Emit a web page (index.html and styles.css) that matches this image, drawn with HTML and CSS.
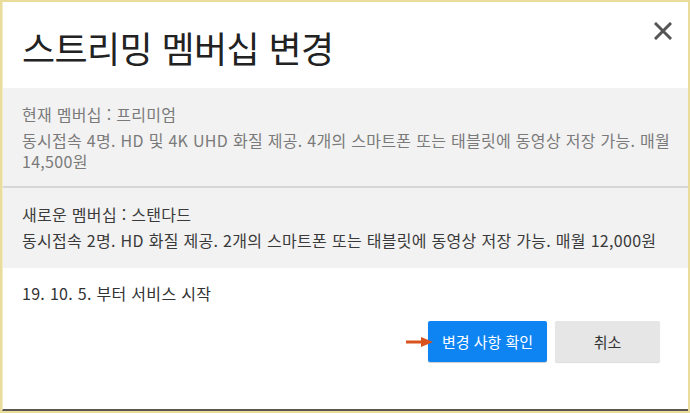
FILE: index.html
```html
<!DOCTYPE html>
<html lang="ko">
<head>
    <meta charset="UTF-8">
    <title>스트리밍 멤버십 변경</title>
    <link rel="stylesheet" href="styles.css">
</head>
<body>
    <div class="frame">
        <div class="dialog">
            <div class="dialog-header">
                <h1 class="title">스트리밍 멤버십 변경</h1>
                <button class="close" aria-label="닫기">
                    <svg width="18" height="18" viewBox="0 0 18 18">
                        <path d="M2 2 L16 16 M16 2 L2 16" stroke="#555" stroke-width="3" stroke-linecap="square" />
                    </svg>
                </button>
            </div>

            <div class="plan plan-current">
                <div class="plan-name">현재 멤버십 : 프리미엄</div>
                <div class="plan-desc">동시접속 4명. HD 및 4K UHD 화질 제공. 4개의 스마트폰 또는 태블릿에 동영상 저장 가능. 매월 14,500원</div>
            </div>

            <div class="plan plan-new">
                <div class="plan-name">새로운 멤버십 : 스탠다드</div>
                <div class="plan-desc">동시접속 2명. HD 화질 제공. 2개의 스마트폰 또는 태블릿에 동영상 저장 가능. 매월 12,000원</div>
            </div>

            <div class="start-date">19. 10. 5. 부터 서비스 시작</div>

            <div class="actions">
                <div class="confirm-wrap">
                    <svg class="pointer" width="28" height="10" viewBox="0 0 28 10">
                        <path d="M0 5 L18 5" stroke="#d9531e" stroke-width="3" />
                        <path d="M15 0 L27 5 L15 10 Z" fill="#d9531e" />
                    </svg>
                    <button class="btn btn-primary">변경 사항 확인</button>
                </div>
                <button class="btn btn-secondary">취소</button>
            </div>
        </div>
    </div>
</body>
</html>
```

FILE: styles.css
```css
* {
    box-sizing: border-box;
}

body {
    margin: 0;
    padding: 0;
    background: #e9d98f;
    font-family: "Noto Sans CJK KR", "Noto Sans", sans-serif;
}

.frame {
    width: 690px;
    height: 413px;
    padding: 2px 2px 2px 2px;
    background: #eadc9a;
}

.dialog {
    height: 100%;
    background: #fff;
    border-bottom: 2px solid #5a5650;
    border-left: 1px solid #f3ecc8;
}

.dialog-header {
    display: flex;
    justify-content: space-between;
    align-items: flex-start;
    height: 86px;
    padding: 0 16px 0 19px;
}

.title {
    margin: 19px 0 0 0;
    font-size: 36px;
    font-weight: 400;
    color: #222;
    letter-spacing: -0.6px;
}

.close {
    margin-top: 20px;
    padding: 0;
    border: none;
    background: none;
    cursor: pointer;
}

.plan {
    background: #f2f2f2;
    padding: 14px 12px 12px 19px;
    font-size: 16px;
    letter-spacing: 0.3px;
    line-height: 24px;
    word-break: keep-all;
}

.plan-current {
    height: 100px;
    color: #7a7a7a;
    border-bottom: 2px solid #d6d6d6;
}

.plan-new {
    height: 80px;
    color: #3a3a3a;
}

.plan-name {
    margin-bottom: 4px;
}

.plan-desc {
    line-height: 21px;
}

.start-date {
    padding: 13px 19px 0 19px;
    font-size: 16px;
    letter-spacing: 0.3px;
    color: #333;
}

.actions {
    display: flex;
    justify-content: flex-end;
    gap: 8px;
    padding: 16px 28px 0 0;
}

.confirm-wrap {
    position: relative;
}

.pointer {
    position: absolute;
    left: -22px;
    top: 16px;
}

.btn {
    height: 41px;
    border: none;
    border-radius: 2px;
    font-family: inherit;
    font-size: 15px;
    cursor: pointer;
}

.btn-primary {
    width: 119px;
    background: #0d84f2;
    color: #fff;
    box-shadow: 0 1px 1px rgba(0, 0, 0, 0.2);
}

.btn-secondary {
    width: 105px;
    background: #e6e6e6;
    color: #333;
    box-shadow: 0 1px 1px rgba(0, 0, 0, 0.15);
}
```
